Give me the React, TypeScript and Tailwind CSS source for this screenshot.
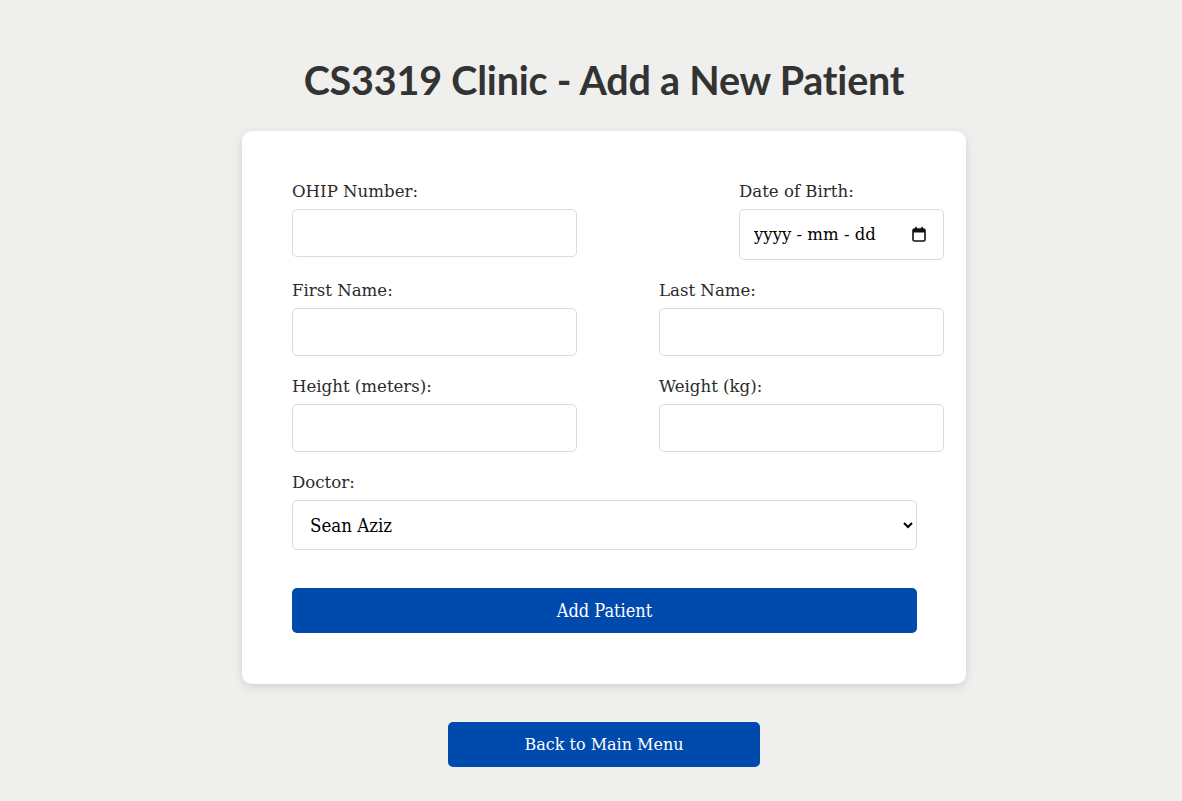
import React from "react";

const serif = "font-['DejaVu_Serif',serif]";

function Field({ label, width, children }: { label: string; width: string; children: React.ReactNode }) {
    return (
        <div className={`flex flex-col ${width}`}>
            <label className="text-[16.6px] leading-[24px] mb-[5px] text-[#2b2b2b]">{label}</label>
            {children}
        </div>
    );
}

const inputCls =
    "h-[48px] w-full rounded-[5px] border border-[#dcdcdc] bg-white px-[12px] text-[16px] text-black outline-none";

function CalendarIcon() {
    return (
        <svg width="14" height="16" viewBox="0 0 14 16" className="absolute right-[18px] top-[17px] pointer-events-none">
            <rect x="1" y="3" width="12" height="12" rx="1.5" fill="none" stroke="#111" strokeWidth="1.6" />
            <rect x="1" y="3" width="12" height="3.5" fill="#111" />
            <rect x="3.2" y="0.8" width="1.6" height="3" fill="#111" />
            <rect x="9.2" y="0.8" width="1.6" height="3" fill="#111" />
        </svg>
    );
}

export default function App() {
    return (
        <div className={`min-h-[801px] bg-[#eff0ee] pl-[26px] ${serif}`}>
            <div className="flex flex-col items-center pt-[53px]">
                <h1 className="font-['Lato',sans-serif] font-bold text-[39.5px] leading-[54px] text-[#333] tracking-[-0.2px]">
                    CS3319 Clinic - Add a New Patient
                </h1>

                <div className="mt-[24px] w-[724px] rounded-[10px] bg-white px-[50px] pt-[49px] pb-[51px] pr-[49px] shadow-[0_3px_10px_rgba(0,0,0,0.12)]">
                    <div className="flex w-[652px] flex-col gap-[19px]">
                        <div className="flex justify-between">
                            <Field label="OHIP Number:" width="w-[285px]">
                                <input className={inputCls} type="text" />
                            </Field>
                            <Field label="Date of Birth:" width="w-[205px]">
                                <div className="relative">
                                    <input
                                        className="h-[51px] w-full rounded-[5px] border border-[#dcdcdc] bg-white pl-[14px] pr-[40px] text-[16.5px] text-black outline-none placeholder:text-black"
                                        type="text"
                                        placeholder="yyyy - mm - dd"
                                    />
                                    <CalendarIcon />
                                </div>
                            </Field>
                        </div>
                        <div className="flex justify-between">
                            <Field label="First Name:" width="w-[285px]">
                                <input className={inputCls} type="text" />
                            </Field>
                            <Field label="Last Name:" width="w-[285px]">
                                <input className={inputCls} type="text" />
                            </Field>
                        </div>
                        <div className="flex justify-between">
                            <Field label="Height (meters):" width="w-[285px]">
                                <input className={inputCls} type="text" />
                            </Field>
                            <Field label="Weight (kg):" width="w-[285px]">
                                <input className={inputCls} type="text" />
                            </Field>
                        </div>
                        <Field label="Doctor:" width="w-[625px]">
                            <select
                                className="h-[50px] w-full rounded-[5px] border border-[#dcdcdc] bg-white pl-[13px] pr-[8px] text-[18.5px] text-black font-stretch-condensed outline-none"
                                defaultValue="aziz"
                            >
                                <option value="aziz">Sean Aziz</option>
                            </select>
                        </Field>
                    </div>

                    <button className="mt-[38px] h-[45px] w-[625px] rounded-[5px] bg-[#004aad] text-[18px] text-white font-stretch-condensed">
                        Add Patient
                    </button>
                </div>

                <button className="mt-[38px] h-[45px] w-[312px] rounded-[5px] bg-[#004aad] text-[16px] text-white">
                    Back to Main Menu
                </button>
            </div>
        </div>
    );
}
